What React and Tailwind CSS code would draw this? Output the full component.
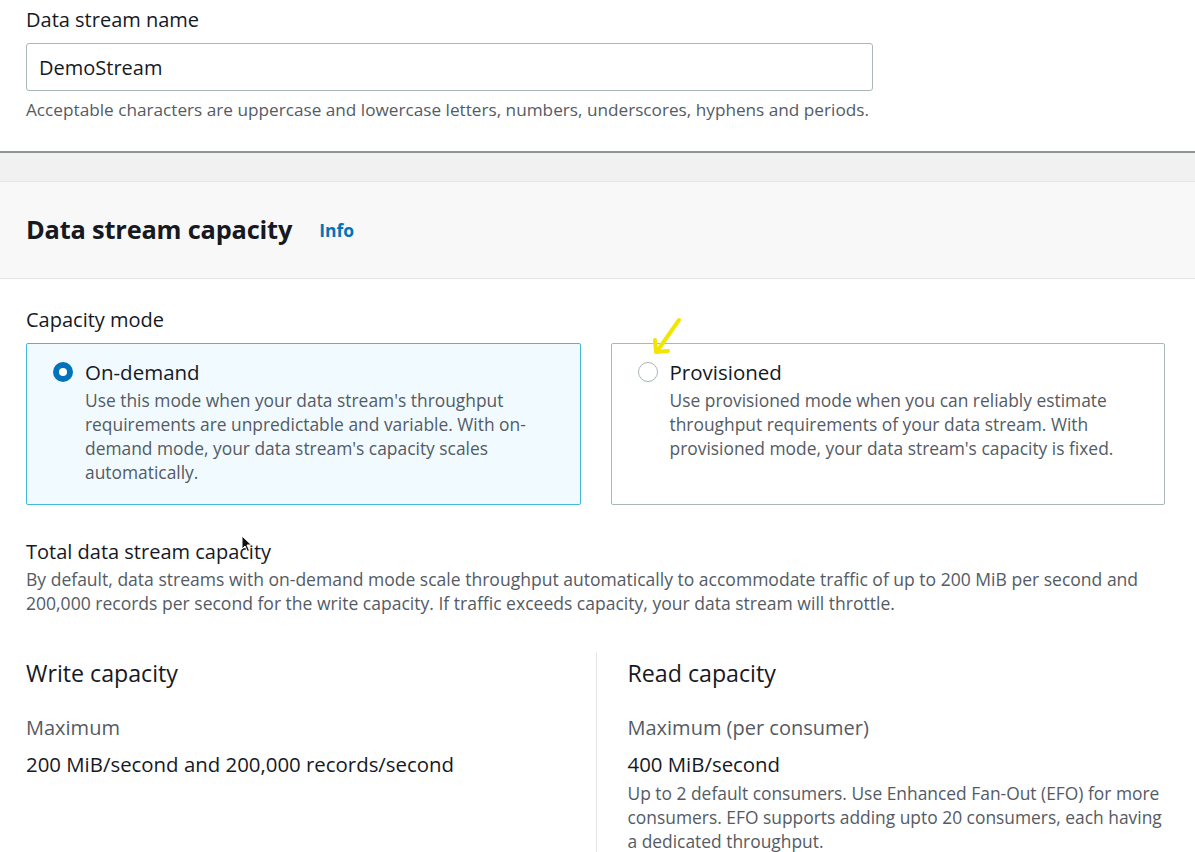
import { useState } from 'react'

const font = { fontFamily: '"Open Sans", "Noto Sans", Arial, sans-serif' }

function Radio({ checked }) {
  if (checked) {
    return (
      <span className="mt-[5px] flex h-[20px] w-[20px] flex-shrink-0 items-center justify-center rounded-full bg-[#0073bb]">
        <span className="h-[8px] w-[8px] rounded-full bg-white" />
      </span>
    )
  }
  return <span className="mt-[5px] h-[20px] w-[20px] flex-shrink-0 rounded-full border-[1.5px] border-[#aab7b8] bg-white" />
}

function ModeCard({ title, text, checked, onClick }) {
  return (
    <button
      onClick={onClick}
      className={
        'flex gap-[12px] rounded-[2px] border pl-[26px] pr-[24px] pt-[13px] pb-[18px] text-left cursor-pointer ' +
        (checked ? 'border-[#44b9d6] bg-[#f1faff]' : 'border-[#aab7b8] bg-white')
      }
    >
      <Radio checked={checked} />
      <div>
        <div className="text-[20.5px] leading-[30px] text-[#16191f]">{title}</div>
        <p className="mt-[1px] text-[17.4px] leading-[24px] text-[#545b64]">{text}</p>
      </div>
    </button>
  )
}

export default function App() {
  const [mode, setMode] = useState('ondemand')
  const [name, setName] = useState('DemoStream')

  return (
    <div style={font} className="relative min-h-[852px] w-[1195px] overflow-hidden bg-white text-[#16191f]">
      <div className="pl-[26px] pr-[30px] pt-[6px]">
        <label className="block text-[20px] leading-[28px]">Data stream name</label>
        <input
          value={name}
          onChange={(e) => setName(e.target.value)}
          className="mt-[9px] block h-[48px] w-[847px] rounded-[3px] border border-[#aab7b8] px-[12px] text-[20px] text-[#16191f] outline-none"
        />
        <p className="mt-[7px] text-[17.2px] leading-[24px] text-[#545b64]">
          Acceptable characters are uppercase and lowercase letters, numbers, underscores, hyphens and periods.
        </p>
      </div>

      <div className="mt-[29px] h-[30px] border-t-2 border-[#8f9595] bg-[#f0f1f0]" />

      <div className="flex h-[98px] items-center gap-[27px] border-y border-[#e6e6e6] bg-[#f8f8f8] px-[26px]">
        <h2 className="pb-[2px] text-[25.4px] font-bold leading-[34px] tracking-[-0.2px]">Data stream capacity</h2>
        <a className="text-[17.5px] font-bold text-[#0073bb] cursor-pointer">Info</a>
      </div>

      <div className="pl-[26px] pr-[30px]">
        <div className="mt-[27px] text-[20px] leading-[28px]">Capacity mode</div>
        <div className="mt-[9px] grid h-[162px] grid-cols-2 gap-[30px]">
          <ModeCard
            title="On-demand"
            checked={mode === 'ondemand'}
            onClick={() => setMode('ondemand')}
            text="Use this mode when your data stream's throughput requirements are unpredictable and variable. With on-demand mode, your data stream's capacity scales automatically."
          />
          <ModeCard
            title="Provisioned"
            checked={mode === 'provisioned'}
            onClick={() => setMode('provisioned')}
            text="Use provisioned mode when you can reliably estimate throughput requirements of your data stream. With provisioned mode, your data stream's capacity is fixed."
          />
        </div>

        <div className="mt-[33px] text-[20px] leading-[28px]">Total data stream capacity</div>
        <p className="mt-[1px] text-[17.55px] leading-[24px] text-[#545b64]">
          By default, data streams with on-demand mode scale throughput automatically to accommodate traffic of up to 200 MiB per second and 200,000 records per second for the write capacity. If traffic exceeds capacity, your data stream will throttle.
        </p>

        <div className="mt-[37px] grid grid-cols-2">
          <div className="pt-[5px]">
            <h3 className="text-[23.2px] leading-[32px]">Write capacity</h3>
            <div className="mt-[25px] text-[20px] leading-[28px] text-[#545b64]">Maximum</div>
            <div className="mt-[8px] text-[20.4px] leading-[28px]">200 MiB/second and 200,000 records/second</div>
          </div>
          <div className="border-l border-[#e5e5e5] pl-[31px] pt-[5px] pb-[20px]">
            <h3 className="text-[23.2px] leading-[32px]">Read capacity</h3>
            <div className="mt-[25px] text-[20px] leading-[28px] text-[#545b64]">Maximum (per consumer)</div>
            <div className="mt-[8px] text-[20.4px] leading-[28px]">400 MiB/second</div>
            <p className="mt-[3px] text-[17.4px] leading-[24px] text-[#545b64]">
              Up to 2 default consumers. Use Enhanced Fan-Out (EFO) for more consumers. EFO supports adding upto 20 consumers, each having a dedicated throughput.
            </p>
          </div>
        </div>
      </div>

      {/* yellow annotation arrow */}
      <svg className="pointer-events-none absolute left-[648px] top-[314px]" width="40" height="44" viewBox="0 0 40 44">
        <g fill="none" stroke="#f2e600" strokeWidth="4" strokeLinecap="round" strokeLinejoin="round">
          <path d="M31 6 L10 36" />
          <path d="M7 26 L8 38 L20 37" />
        </g>
      </svg>

      {/* mouse cursor */}
      <svg className="pointer-events-none absolute left-[241px] top-[535px]" width="12" height="18" viewBox="0 0 12 18">
        <path d="M1 1 L1 14 L4 11 L6.5 16.5 L8.5 15.5 L6 10 L10.5 10 Z" fill="#111" stroke="#fff" strokeWidth="1" />
      </svg>
    </div>
  )
}
